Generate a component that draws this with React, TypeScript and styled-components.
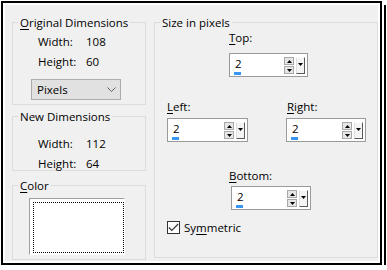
import React from 'react';
import styled, { createGlobalStyle } from 'styled-components';

const Global = createGlobalStyle`
  html, body { margin: 0; padding: 0; background: #fff; }
  body {
    font-family: "Open Sans", "Noto Sans", sans-serif;
    font-size: 11.5px;
    color: #000;
  }
  * { box-sizing: border-box; }
`;

const Frame = styled.div`
  margin: 1px 0 0 1px;
  width: 381px;
  height: 264px;
  border: 2px solid #000;
  box-shadow: 2px 2px 0 #fff, 4px 4px 0 #000;
  padding: 2px;
  background: #fff;
`;

const Panel = styled.div`
  height: 100%;
  background: #f0f0f0;
  display: flex;
  align-items: flex-start;
  gap: 8px;
  padding: 17px 0 0 7px;
`;

const Column = styled.div`
  display: flex;
  flex-direction: column;
  width: 134px;
`;

const Group = styled.div<{ $h: number; $mt?: number; $w?: number }>`
  border: 1px solid #dcdcdc;
  height: ${(p) => p.$h}px;
  width: ${(p) => (p.$w ? `${p.$w}px` : 'auto')};
  margin-top: ${(p) => p.$mt ?? 0}px;
  display: flex;
  flex-direction: column;
`;

const Title = styled.div`
  margin: -8px 0 0 5px;
  padding: 0 2px;
  line-height: 15px;
  background: #f0f0f0;
  width: fit-content;
  white-space: nowrap;
`;

const U = styled.span`
  text-decoration: underline;
  text-underline-offset: 2px;
`;

const InfoRow = styled.div<{ $mt: number }>`
  display: flex;
  margin: ${(p) => p.$mt}px 0 0 25px;
  line-height: 15px;
`;

const InfoLabel = styled.span`
  width: 48px;
`;

const Select = styled.div`
  margin: 10px 0 0 18px;
  width: 90px;
  height: 21px;
  background: #e1e1e1;
  border: 1px solid #adadad;
  display: flex;
  align-items: center;
  justify-content: space-between;
  padding: 0 4px 0 5px;
  line-height: 15px;
`;

const Swatch = styled.div`
  margin: 5px 0 0 16px;
  width: 96px;
  height: 57px;
  background: #fff;
  border: 1px solid;
  border-color: #a0a0a0 #fff #fff #a0a0a0;
  padding: 3px 0 1px 3px;
  display: flex;
`;

const Dotted = styled.div`
  flex: 1;
  border: 1px dotted #000;
`;

const Field = styled.div<{ $ml: number; $mt: number }>`
  display: flex;
  flex-direction: column;
  margin: ${(p) => p.$mt}px 0 0 ${(p) => p.$ml}px;
`;

const FieldLabel = styled.div<{ $shift?: number }>`
  line-height: 15px;
  margin-left: ${(p) => p.$shift ?? 0}px;
  white-space: nowrap;
`;

const Spinner = styled.div<{ $w: number; $gap: number }>`
  margin-top: ${(p) => p.$gap}px;
  width: ${(p) => p.$w}px;
  height: 24px;
  background: #fff;
  border: 1px solid #9a9a9a;
  display: flex;
  align-items: flex-start;
  padding: 3px 2px 0 3px;
`;

const ValueArea = styled.div`
  flex: 1;
  display: flex;
  flex-direction: column;
`;

const Value = styled.div`
  line-height: 15px;
  margin: -1px 0 0 2px;
`;

const Caret = styled.div`
  width: 7px;
  height: 3px;
  margin: 1px 0 0 1px;
  background: #3a96f3;
`;

const SpinCol = styled.div`
  display: flex;
  flex-direction: column;
  gap: 1px;
  margin-right: 2px;
`;

const SpinBtn = styled.div`
  width: 10px;
  height: 8px;
  background: #e6e6e6;
  border: 1px solid #a8a8a8;
  display: flex;
  align-items: center;
  justify-content: center;
`;

const DropBtn = styled.div`
  width: 9px;
  height: 17px;
  background: #f4f4f4;
  border: 1px solid;
  border-color: #fff #5a5a5a #5a5a5a #e0e0e0;
  display: flex;
  align-items: center;
  justify-content: center;
  padding-bottom: 3px;
`;

const Pair = styled.div`
  display: flex;
  align-items: flex-start;
`;

const CheckRow = styled.label`
  display: flex;
  align-items: center;
  gap: 4px;
  margin: 10px 0 0 12px;
  line-height: 15px;
`;

const Box = styled.span`
  width: 13px;
  height: 13px;
  border: 1px solid #333;
  background: #fff;
  display: flex;
  align-items: center;
  justify-content: center;
`;

const Tri = ({ up }: { up?: boolean }) => (
  <svg width="5" height="3" viewBox="0 0 5 3">
    <path d={up ? 'M2.5 0 L5 3 L0 3 Z' : 'M0 0 L5 0 L2.5 3 Z'} fill="#000" />
  </svg>
);

const Spin = ({ w, gap }: { w: number; gap: number }) => (
  <Spinner $w={w} $gap={gap}>
    <ValueArea>
      <Value>2</Value>
      <Caret />
    </ValueArea>
    <SpinCol>
      <SpinBtn>
        <Tri up />
      </SpinBtn>
      <SpinBtn>
        <Tri />
      </SpinBtn>
    </SpinCol>
    <DropBtn>
      <Tri />
    </DropBtn>
  </Spinner>
);

export default function App() {
  return (
    <>
      <Global />
      <Frame>
        <Panel>
          <Column>
            <Group $h={83}>
              <Title>
                <U>O</U>riginal Dimensions
              </Title>
              <InfoRow $mt={4}>
                <InfoLabel>Width:</InfoLabel>
                <span>108</span>
              </InfoRow>
              <InfoRow $mt={5}>
                <InfoLabel>Height:</InfoLabel>
                <span>60</span>
              </InfoRow>
              <Select>
                <span>Pixels</span>
                <svg width="9" height="5" viewBox="0 0 9 5">
                  <path d="M0.5 0.5 L4.5 4.5 L8.5 0.5" stroke="#606060" fill="none" strokeWidth="1" />
                </svg>
              </Select>
            </Group>
            <Group $h={55} $mt={11}>
              <Title>New Dimensions</Title>
              <InfoRow $mt={12}>
                <InfoLabel>Width:</InfoLabel>
                <span>112</span>
              </InfoRow>
              <InfoRow $mt={5}>
                <InfoLabel>Height:</InfoLabel>
                <span>64</span>
              </InfoRow>
            </Group>
            <Group $h={75} $mt={14}>
              <Title>
                <U>C</U>olor
              </Title>
              <Swatch>
                <Dotted />
              </Swatch>
            </Group>
          </Column>
          <Group $h={236} $w={224}>
            <Title>Size in pixels</Title>
            <Field $ml={74} $mt={0}>
              <FieldLabel>
                <U>T</U>op:
              </FieldLabel>
              <Spin w={79} gap={8} />
            </Field>
            <Pair>
              <Field $ml={12} $mt={22}>
                <FieldLabel>
                  <U>L</U>eft:
                </FieldLabel>
                <Spin w={81} gap={4} />
              </Field>
              <Field $ml={38} $mt={22}>
                <FieldLabel $shift={1}>
                  <U>R</U>ight:
                </FieldLabel>
                <Spin w={80} gap={4} />
              </Field>
            </Pair>
            <Field $ml={76} $mt={26}>
              <FieldLabel $shift={-2}>
                <U>B</U>ottom:
              </FieldLabel>
              <Spin w={80} gap={3} />
            </Field>
            <CheckRow>
              <Box>
                <svg width="11" height="9" viewBox="0 0 11 9">
                  <path d="M0.8 4.5 L3.8 7.5 L10.2 1" stroke="#333" fill="none" strokeWidth="1.1" />
                </svg>
              </Box>
              <span>
                Sy<U>m</U>metric
              </span>
            </CheckRow>
          </Group>
        </Panel>
      </Frame>
    </>
  );
}
